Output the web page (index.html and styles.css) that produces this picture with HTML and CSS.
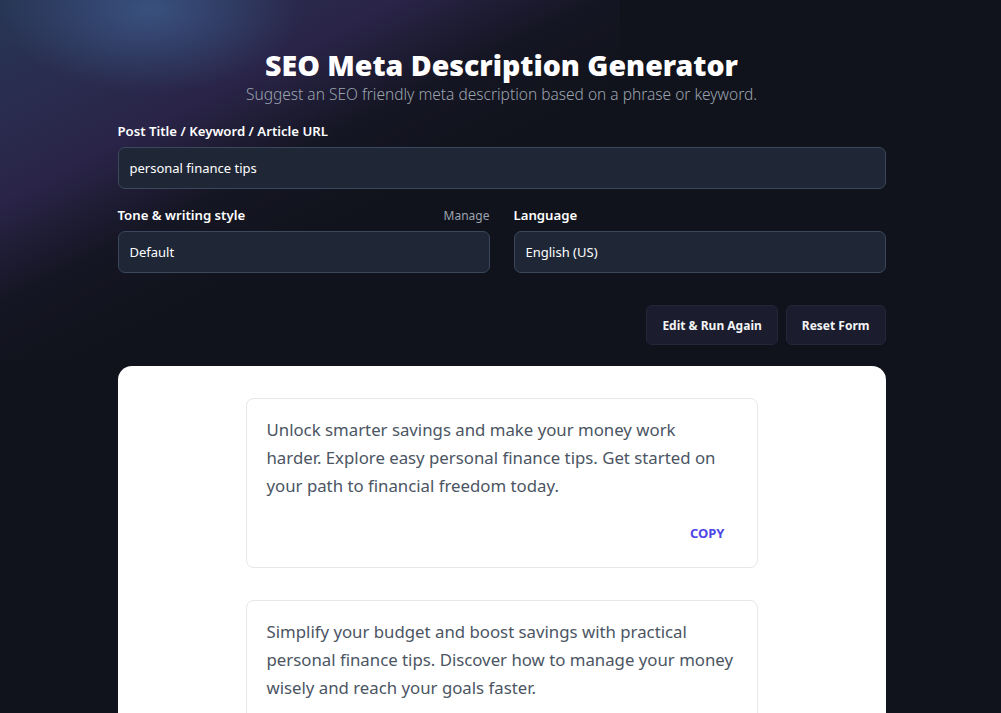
FILE: index.html
```html
<!DOCTYPE html>
<html lang="en">
<head>
    <meta charset="UTF-8">
    <meta name="viewport" content="width=device-width, initial-scale=1.0">
    <title>SEO Meta Description Generator</title>
    <link rel="stylesheet" href="styles.css">
</head>
<body>
    <div class="page">
        <header class="header">
            <h1 class="title">SEO Meta Description Generator</h1>
            <p class="subtitle">Suggest an SEO friendly meta description based on a phrase or keyword.</p>
        </header>

        <form class="form">
            <div class="field">
                <label class="label" for="keyword">Post Title / Keyword / Article URL</label>
                <input type="text" id="keyword" class="input" value="personal finance tips">
            </div>

            <div class="row">
                <div class="field">
                    <div class="label-row">
                        <label class="label" for="tone">Tone &amp; writing style</label>
                        <a class="manage" href="#">Manage</a>
                    </div>
                    <div id="tone" class="input">Default</div>
                </div>
                <div class="field">
                    <div class="label-row">
                        <label class="label" for="language">Language</label>
                    </div>
                    <div id="language" class="input">English (US)</div>
                </div>
            </div>

            <div class="actions">
                <button type="button" class="button">Edit &amp; Run Again</button>
                <button type="button" class="button">Reset Form</button>
            </div>
        </form>

        <section class="results">
            <div class="result">
                <p class="result-text">Unlock smarter savings and make your money work<br>harder. Explore easy personal finance tips. Get started on your path to financial freedom today.</p>
                <div class="result-footer">
                    <button type="button" class="copy">COPY</button>
                </div>
            </div>
            <div class="result">
                <p class="result-text">Simplify your budget and boost savings with practical personal finance tips. Discover how to manage your money wisely and reach your goals faster.</p>
                <div class="result-footer">
                    <button type="button" class="copy">COPY</button>
                </div>
            </div>
        </section>
    </div>
</body>
</html>
```

FILE: styles.css
```css
* {
    box-sizing: border-box;
}

body {
    margin: 0;
    padding-left: 2px;
    min-height: 100vh;
    font-family: "Noto Sans", "Open Sans", Arial, sans-serif;
    color: #fff;
    background-color: #11131c;
    background-image:
        radial-gradient(ellipse 200px 110px at 150px 10px, rgba(62, 92, 142, 0.75), transparent 75%),
        linear-gradient(153deg, rgba(48, 66, 105, 0.75) 0%, rgba(62, 50, 108, 0.55) 30%, rgba(30, 28, 52, 0.3) 45%, transparent 58%);
    background-size: 100% 100%, 620px 360px;
    background-repeat: no-repeat;
    overflow: hidden;
}

.page {
    width: 768px;
    margin: 0 auto;
    padding-top: 46px;
}

.header {
    text-align: center;
}

.title {
    margin: 0;
    font-size: 28.5px;
    line-height: 38px;
    font-weight: 900;
}

.subtitle {
    margin: 0;
    font-size: 15.5px;
    line-height: 20px;
    font-weight: 300;
    color: #9ca3af;
}

.form {
    margin-top: 17px;
}

.field {
    display: flex;
    flex-direction: column;
    flex: 1;
}

.label-row {
    display: flex;
    justify-content: space-between;
    align-items: center;
}

.label {
    display: block;
    font-size: 13.2px;
    line-height: 20px;
    font-weight: 600;
    color: #fff;
    margin-bottom: 6px;
}

.manage {
    font-size: 12px;
    color: #9ca3af;
    text-decoration: none;
    margin-bottom: 6px;
}

.input {
    display: flex;
    align-items: center;
    width: 100%;
    height: 42px;
    padding: 0 11px;
    font-family: inherit;
    font-size: 13px;
    color: #fff;
    background: #1f2737;
    border: 1px solid #3a475c;
    border-radius: 7px;
    outline: none;
}

.row {
    display: flex;
    gap: 24px;
    margin-top: 16px;
}

.actions {
    display: flex;
    justify-content: flex-end;
    gap: 8px;
    margin-top: 32px;
}

.button {
    height: 40px;
    padding: 0 15px;
    font-family: inherit;
    font-size: 12px;
    font-weight: 700;
    color: #f3f4f6;
    background: #1b1c2d;
    border: 1px solid #242738;
    border-radius: 6px;
    cursor: pointer;
}

.results {
    margin-top: 21px;
    background: #fff;
    border-radius: 14px;
    padding: 32px 0 40px;
    display: flex;
    flex-direction: column;
    align-items: center;
    gap: 32px;
}

.result {
    width: 512px;
    padding: 17px 16px 20px 20px;
    border: 1px solid #e5e7eb;
    border-radius: 8px;
}

.result-text {
    margin: 0;
    font-size: 16.8px;
    line-height: 28px;
    color: #4b5563;
}

.result-footer {
    display: flex;
    justify-content: flex-end;
    margin-top: 19px;
    margin-right: 4px;
}

.copy {
    height: 28px;
    padding: 0 12px;
    font-family: inherit;
    font-size: 13px;
    font-weight: 700;
    color: #4f46e5;
    background: none;
    border: none;
    cursor: pointer;
}
```
